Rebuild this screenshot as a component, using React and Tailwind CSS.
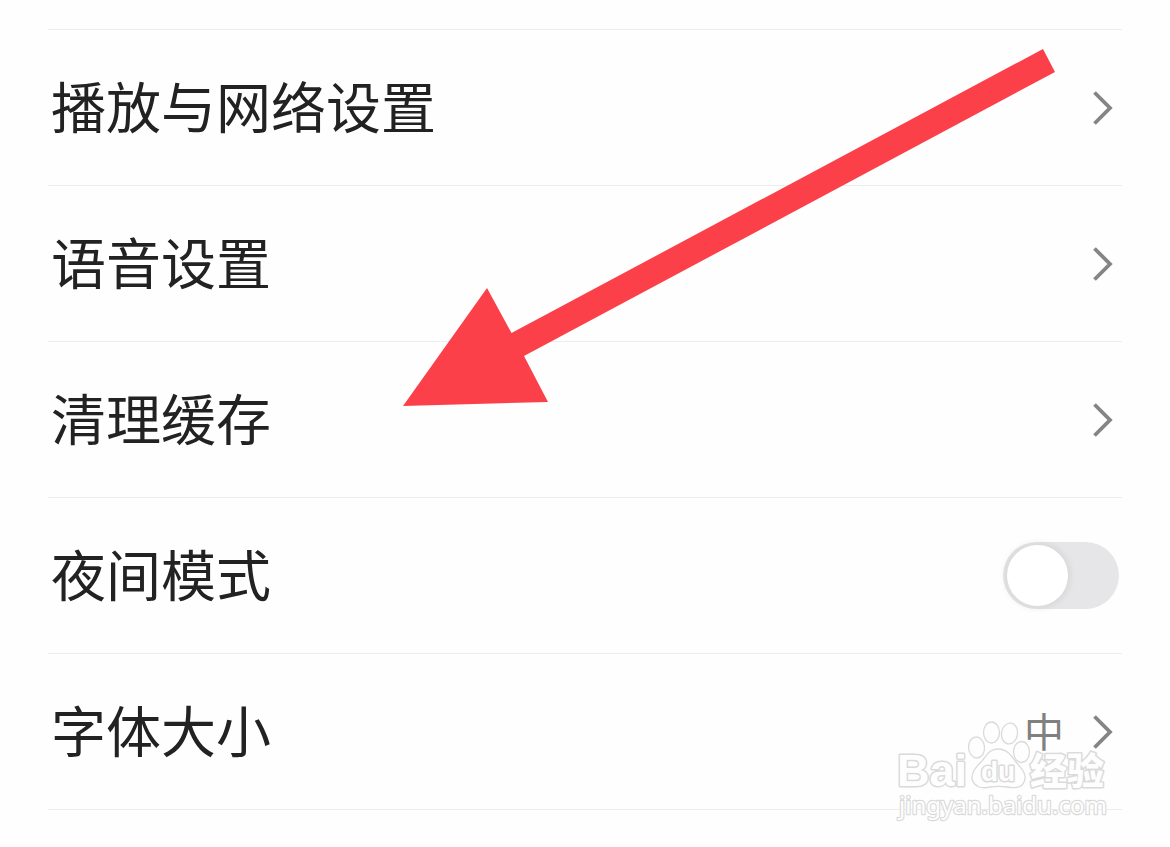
import React from "react";

function Chevron() {
  return (
    <svg className="h-9 w-6 shrink-0" viewBox="0 0 24 36" fill="none" stroke="#858585" strokeWidth="3.8" strokeLinecap="butt" strokeLinejoin="miter" aria-hidden="true">
      <path d="M2.500 2.500 L18 18 L2.500 33.500" />
    </svg>
  );
}

function LinkRow({ label, value }) {
  return (
    <li className="border-b border-[#ededed]">
      <button type="button" className="flex h-[155px] w-full items-center justify-between pr-1.5 pl-[3px] text-left">
        <span className="pb-2 text-[55px] leading-[80px]">{label}</span>
        <span className="flex items-center gap-7">
          {value && <span className="pb-1 text-[40px] leading-[60px] text-[#808080]">{value}</span>}
          <Chevron />
        </span>
      </button>
    </li>
  );
}

function SwitchRow({ label }) {
  return (
    <li className="border-b border-[#ededed]">
      <label className="flex h-[155px] w-full cursor-pointer items-center justify-between pr-[3px] pl-[3px]">
        <span className="pb-2 text-[55px] leading-[80px]">{label}</span>
        <input type="checkbox" role="switch" className="peer sr-only" />
        <span className="flex h-[67px] w-[116px] items-center rounded-full bg-[#e6e6e8] px-1 peer-checked:justify-end peer-checked:bg-[#fc4049]">
          <span className="size-[61px] rounded-full bg-white shadow-[0_0_6px_3px_rgba(0,0,0,0.06)]" />
        </span>
      </label>
    </li>
  );
}

function Arrow() {
  return (
    <svg className="pointer-events-none absolute top-12 left-[403px] h-[360px] w-[653px]" viewBox="403 48 653 360" aria-hidden="true">
      <path fill="#fc4049" d="M403 406 L487 288 L511.500 333 L1043 49 L1055 72 L524 356 L548 402 Z" />
    </svg>
  );
}

function Watermark() {
  return (
    <svg
      className="pointer-events-none absolute top-[715px] right-[60px] h-[115px] w-[220px]"
      viewBox="890 715 220 115"
      fill="#fefefe"
      stroke="#dadada"
      strokeWidth="1.3"
      strokeLinejoin="round"
      role="img"
      aria-label="Baidu 经验"
    >
      <ellipse cx="976.500" cy="747.500" rx="8" ry="10.500" transform="rotate(-5 976.500 747.500)" />
      <ellipse cx="991.500" cy="732.500" rx="8" ry="10.500" />
      <ellipse cx="1009.500" cy="733.500" rx="8" ry="10.500" transform="rotate(8 1009.500 733.500)" />
      <ellipse cx="1021.500" cy="752" rx="8" ry="10.500" />
      <path d="M998 749 C1007 749 1011 755 1016 762 C1021 768 1026 773 1025 779 C1023 789 1015 788 1007 787 C1000 786 997 786 990 787 C982 789 974 787 972 779 C971 772 977 766 982 761 C987 755 989 749 998 749 Z" />
      <g className="font-['Liberation_Sans','Noto_Sans_CJK_SC',sans-serif] font-bold" strokeWidth="3" style={{ paintOrder: "stroke" }}>
        <text x="897" y="786" fontSize="45">Bai</text>
        <text x="981" y="781" fontSize="28">du</text>
        <text x="1030" y="785" fontSize="37" className="font-black">经验</text>
      </g>
      <text x="899" y="814" fontSize="24" strokeWidth="2.4" style={{ paintOrder: "stroke" }} className="font-['Noto_Sans',sans-serif] font-normal">jingyan.baidu.com</text>
    </svg>
  );
}

export default function App() {
  return (
    <main className="relative min-h-screen overflow-hidden bg-[#fefefe] px-12 pt-[29px] font-['Noto_Sans_CJK_SC',sans-serif] text-[#222222]">
      <ul className="border-t border-[#ededed]">
        <LinkRow label="播放与网络设置" />
        <LinkRow label="语音设置" />
        <LinkRow label="清理缓存" />
        <SwitchRow label="夜间模式" />
        <LinkRow label="字体大小" value="中" />
      </ul>
      <Arrow />
      <Watermark />
    </main>
  );
}
